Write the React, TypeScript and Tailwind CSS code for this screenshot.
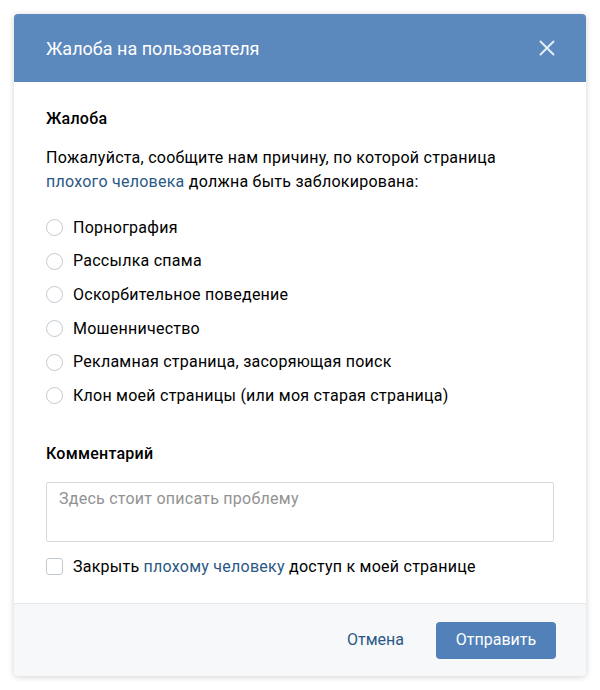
import React from "react";

const options = [
  "Порнография",
  "Рассылка спама",
  "Оскорбительное поведение",
  "Мошенничество",
  "Рекламная страница, засоряющая поиск",
  "Клон моей страницы (или моя старая страница)",
];

export default function App() {
  return (
    <div
      className="w-[600px] h-[690px] bg-white p-[14px]"
      style={{ fontFamily: "Roboto, 'Noto Sans', sans-serif" }}
    >
      <div className="w-[572px] h-[662px] rounded-[4px] bg-white shadow-[0_1px_6px_rgba(0,0,0,0.18)] flex flex-col overflow-hidden">
        <div className="h-[68px] bg-[#5b88bd] flex items-center justify-between pl-[32px] pr-[31px] shrink-0">
          <span className="text-white text-[18px]">Жалоба на пользователя</span>
          <svg width="16" height="16" viewBox="0 0 16 16" className="text-[#e4ecf5]">
            <path d="M1.5 1.5 L14.5 14.5 M14.5 1.5 L1.5 14.5" stroke="currentColor" strokeWidth="2" strokeLinecap="round" />
          </svg>
        </div>
        <div className="flex-1 px-[32px] pt-[27px] text-[16px] tracking-[0.25px] text-[#000]">
          <div className="font-medium leading-[20px]">Жалоба</div>
          <p className="mt-[17px] leading-[24px]">
            Пожалуйста, сообщите нам причину, по которой страница
            <br />
            <span className="text-[#2a5885]">плохого человека</span> должна быть заблокирована:
          </p>
          <div className="mt-[17px] flex flex-col">
            {options.map((o) => (
              <div key={o} className="h-[33.6px] flex items-center gap-[10px]">
                <span className="w-[17px] h-[17px] rounded-full border border-[#c1c9d1] bg-white shrink-0" />
                <span className="leading-[20px]">{o}</span>
              </div>
            ))}
          </div>
          <div className="mt-[31px] font-medium leading-[20px]">Комментарий</div>
          <div className="mt-[18px] h-[60px] w-[508px] border border-[#d3d9de] rounded-[2px] px-[12px] pt-[6px] text-[#929292] leading-[20px]">
            Здесь стоит описать проблему
          </div>
          <div className="mt-[16px] flex items-center gap-[10px] h-[18px]">
            <span className="w-[17px] h-[17px] rounded-[3px] border border-[#c1c9d1] bg-white shrink-0" />
            <span className="leading-[20px]">
              Закрыть <span className="text-[#2a5885]">плохому человеку</span> доступ к моей странице
            </span>
          </div>
        </div>
        <div className="h-[73px] shrink-0 bg-[#f7f8fa] border-t border-[#e7e8ec] flex items-center justify-end pr-[30px] gap-[32px]">
          <span className="text-[16px] text-[#2a5885]">Отмена</span>
          <span className="h-[37px] w-[120px] rounded-[4px] bg-[#5181b8] text-white text-[16px] flex items-center justify-center">
            Отправить
          </span>
        </div>
      </div>
    </div>
  );
}
